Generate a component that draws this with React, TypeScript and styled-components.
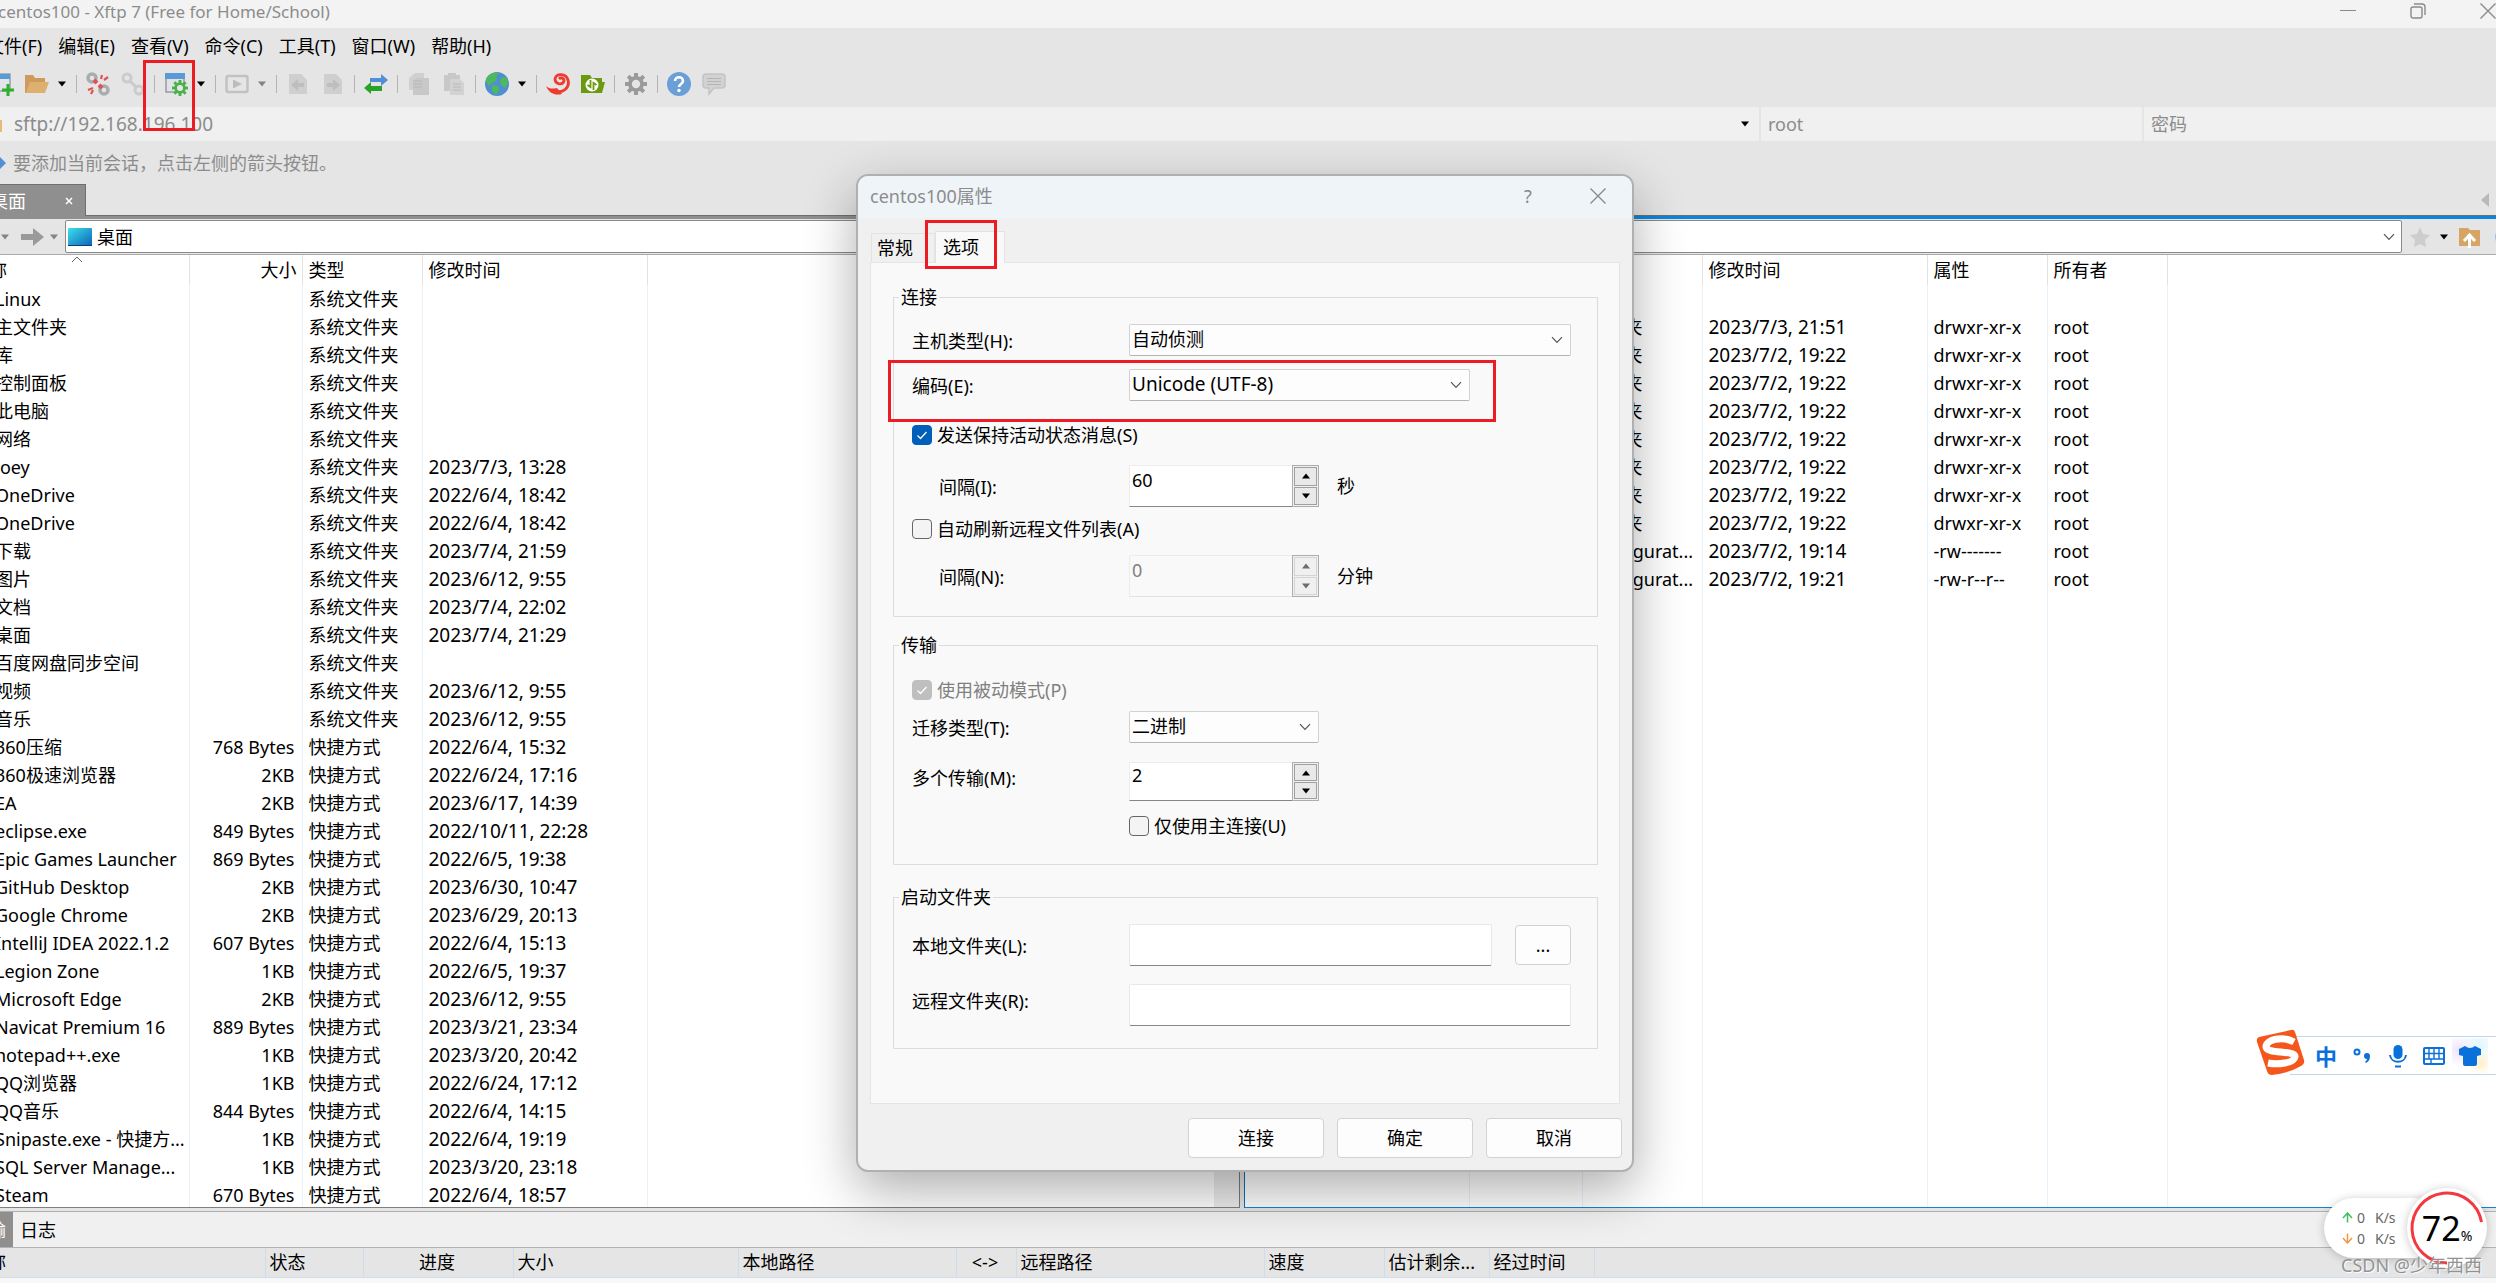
import React from "react";
import styled, { createGlobalStyle, css } from "styled-components";

const GlobalStyle = createGlobalStyle`
  *, *::before, *::after { box-sizing: border-box; }
  body {
    margin: 0;
    overflow: hidden;
    background: #e5e5e5;
    color: #000;
    font-family: "Noto Sans", "Noto Sans CJK SC", sans-serif;
    font-size: 18px;
    line-height: 24px;
  }
  button, input, select { font: inherit; color: inherit; }
  button { padding: 0; border: 0; background: none; }
`;

/* ---------- shell ---------- */

const Shell = styled.div`
  position: relative;
  height: 100vh;
  overflow: hidden;
`;

const Window = styled.main`
  display: flex;
  flex-direction: column;
  height: 100%;
  margin: 0 -20px 0 -32px;
`;

const TitleBar = styled.header`
  display: flex;
  justify-content: space-between;
  height: 28px;
  padding-left: 30px;
  background: #f3f3f3;
  color: #8c8c8c;
`;

const WindowTitle = styled.h1`
  margin: 0;
  font-size: 17px;
  font-weight: 400;
  line-height: 24px;
`;

const WindowControls = styled.div`
  display: flex;
  gap: 14px;
`;

const WindowButton = styled.button`
  display: flex;
  justify-content: center;
  width: 56px;
  height: 28px;
  padding-top: 3px;
  color: #8a8a8a;
`;

const MenuBar = styled.nav`
  display: flex;
  align-items: center;
  gap: 16px;
  height: 37px;
  padding: 0 0 2px 18px;
`;

const MenuItem = styled.button`
  line-height: 24px;
`;

const Toolbar = styled.div`
  display: flex;
  align-items: center;
  gap: 8px;
  height: 42px;
  padding: 0 0 4px 22px;
`;

const ToolButton = styled.button`
  display: flex;
  width: 24px;
  height: 24px;
  & + & { margin-left: 3px; }
  svg { width: 24px; height: 24px; }
`;

const CaretButton = styled.button<{ $muted?: boolean }>`
  display: flex;
  align-items: center;
  justify-content: center;
  width: 10px;
  height: 24px;
  color: ${(p) => (p.$muted ? "#848484" : "#000")};
`;

const Separator = styled.span`
  width: 1px;
  height: 18px;
  margin: 0 1px;
  background: #b4b4b4;
`;

const AddressBar = styled.form`
  display: flex;
  height: 34px;
  gap: 2px;
`;

const AddressCell = styled.div<{ $width?: number }>`
  display: flex;
  align-items: center;
  flex: ${(p) => (p.$width ? `0 0 ${p.$width}px` : "1")};
  padding-left: 7px;
  background: #f0f0f0;
  overflow: hidden;
`;

const AddressInput = styled.input<{ $latin?: boolean }>`
  flex: 1;
  min-width: 0;
  padding: 0;
  border: 0;
  outline: 0;
  background: transparent;
  color: #8c8c8c;
  font-size: ${(p) => (p.$latin ? 19 : 18)}px;
  &::placeholder { color: #8c8c8c; opacity: 1; }
`;

const HintBar = styled.p`
  display: flex;
  align-items: center;
  gap: 7px;
  height: 43px;
  margin: 0;
  padding-left: 24px;
  color: #8c8c8c;
`;

/* ---------- file panes ---------- */

const Panes = styled.div`
  display: grid;
  grid-template-columns: minmax(0, 1fr) minmax(0, 1fr);
  gap: 4px;
  flex: 1;
  min-height: 0;
`;

const PaneBox = styled.section`
  display: flex;
  flex-direction: column;
  min-height: 0;
`;

const TabStrip = styled.div<{ $active?: boolean }>`
  display: flex;
  align-items: flex-end;
  justify-content: space-between;
  height: 35px;
  padding-right: 26px;
  border-bottom: 3px solid ${(p) => (p.$active ? "#0a86e0" : "#8f8f8f")};
  box-shadow: inset 0 -1px 0 #6f6f6f;
`;

const SessionTab = styled.div`
  display: flex;
  align-items: center;
  justify-content: space-between;
  width: 118px;
  height: 32px;
  padding: 0 12px 0 22px;
  border-top: 1px solid #6f6f6f;
  border-right: 1px solid #6f6f6f;
  background: #8f8f8f;
  color: #fff;
`;

const TabClose = styled.button`
  display: flex;
`;

const TabScroll = styled.button`
  display: flex;
  margin-left: auto;
  padding-bottom: 9px;
`;

const PathBar = styled.div`
  display: flex;
  align-items: center;
  height: 36px;
  border-bottom: 1px solid #ababab;
`;

const PathNav = styled.div`
  display: flex;
  align-items: center;
  justify-content: flex-end;
  gap: 5px;
  width: 97px;
  padding-right: 6px;
`;

const ArrowButton = styled.button`
  display: flex;
  margin-left: 6px;
`;

const PathCombo = styled.label`
  display: flex;
  align-items: center;
  flex: 1;
  gap: 5px;
  height: 33px;
  padding: 0 6px 0 2px;
  border: 1px solid #8a8a8a;
  border-radius: 2px;
  background: #fff;
`;

const PathInput = styled.input`
  flex: 1;
  min-width: 0;
  padding: 0;
  border: 0;
  outline: 0;
  background: transparent;
`;

const PathTools = styled.div`
  display: flex;
  align-items: center;
  gap: 7px;
  width: 114px;
  padding-left: 6px;
`;

const ListArea = styled.div<{ $active?: boolean }>`
  display: flex;
  flex: 1;
  min-height: 0;
  overflow: hidden;
  background: #fff;
  border-right: 1px solid #7a7a7a;
  border-bottom: 1px solid ${(p) => (p.$active ? "#0a86e0" : "#808080")};
  border-left: ${(p) => (p.$active ? "1px solid #0a6fb8" : "0")};
`;

const ScrollTrack = styled.div`
  width: 25px;
  background: #ececec;
`;

const FileTable = styled.table`
  flex: 1;
  min-width: 0;
  width: 100%;
  height: 100%;
  table-layout: fixed;
  border-collapse: collapse;
`;

const HeadCell = styled.th<{ $align?: string }>`
  position: relative;
  height: 30px;
  padding: 0 5px 0 6px;
  border-right: 1px solid #e2e2e2;
  font-weight: 400;
  text-align: ${(p) => p.$align ?? "left"};
  white-space: nowrap;
  &:first-child { padding-left: 3px; }
  &:last-child { border-right: 0; }
`;

const SortMark = styled.svg`
  position: absolute;
  top: 1px;
  left: calc(50% - 7px);
`;

const Cell = styled.td<{ $kind?: "name" | "size" | "date" }>`
  height: 28px;
  padding: 0 7px 0 6px;
  border-right: 1px solid #e8f2fb;
  overflow: hidden;
  text-overflow: ellipsis;
  white-space: nowrap;
  &:last-child { border-right: 0; }
  ${(p) => p.$kind === "name" && css`padding: 0 2px 0 27px;`}
  ${(p) => p.$kind === "size" && css`text-align: right;`}
  ${(p) => p.$kind === "date" && css`font-size: 19px;`}
`;

const FillerCell = styled.td`
  padding: 0;
  border-right: 1px solid #e8f2fb;
  &:last-child { border-right: 0; }
`;

/* ---------- transfer panel ---------- */

const TransferPanel = styled.section`
  display: flex;
  flex-direction: column;
  height: 72px;
  margin-top: 3px;
  flex: none;
  background: #f8f8f8;
  border-top: 1px solid #b0b0b0;
`;

const PanelTabs = styled.div`
  display: flex;
  height: 36px;
  background: #f0f0f0;
  border-bottom: 1px solid #b4b4b4;
`;

const PanelTab = styled.button<{ $selected?: boolean }>`
  padding: 0 7px 0 ${(p) => (p.$selected ? 2 : 7)}px;
  background: ${(p) => (p.$selected ? "#8f8f8f" : "transparent")};
  color: ${(p) => (p.$selected ? "#fff" : "#000")};
`;

const TransferTable = styled.table`
  width: 100%;
  table-layout: fixed;
  border-collapse: collapse;
  background: #e5e5e5;
  border-bottom: 1px solid #d0dcea;
`;

const TransferHead = styled.th<{ $align?: string }>`
  height: 29px;
  padding: 0 6px 0 4px;
  border-right: 1px solid #cfdcea;
  font-weight: 400;
  text-align: ${(p) => p.$align ?? "left"};
  white-space: nowrap;
  &:first-child { padding-left: 2px; }
  &:last-child { border-right: 0; }
`;

/* ---------- dialog ---------- */

const Dialog = styled.section`
  position: absolute;
  top: 174px;
  left: 856px;
  width: 778px;
  padding: 0 12px 12px;
  border: 2px solid #b0b0b0;
  border-radius: 12px;
  background: #f0f0f0;
  background-clip: padding-box;
  box-shadow: 0 18px 52px rgba(0, 0, 0, 0.32);
`;

const DialogBar = styled.header`
  display: flex;
  align-items: center;
  height: 42px;
  margin: 0 -12px;
  padding: 0 14px 2px 12px;
  border-radius: 10px 10px 0 0;
  background: #eff4f9;
  color: #8c8c8c;
`;

const DialogTitle = styled.h2`
  flex: 1;
  margin: 0;
  font-size: 18px;
  font-weight: 400;
`;

const DialogIcon = styled.button`
  display: flex;
  justify-content: center;
  width: 40px;
  margin-left: 30px;
  color: #8a8a8a;
`;

const TabList = styled.div`
  display: flex;
  align-items: flex-end;
  height: 44px;
  padding-left: 1px;
`;

const Tab = styled.button<{ $selected?: boolean }>`
  border: 1px solid #e3e3e3;
  border-bottom: 0;
  height: 29px;
  width: 64px;
  padding-right: 16px;
  text-align: center;
  ${(p) =>
    p.$selected &&
    css`
      height: 32px;
      width: 70px;
      padding: 0 18px 2px 0;
      margin-bottom: -1px;
      background: #f9f9f9;
    `}
`;

const TabPanel = styled.div`
  padding: 22px 21px 54px 22px;
  border: 1px solid #e5e5e5;
  background: #f9f9f9;
`;

const Group = styled.fieldset<{ $gap: number; $bottom: number }>`
  min-width: 0;
  margin: 0 0 ${(p) => p.$gap}px;
  padding: 0 26px ${(p) => p.$bottom}px 18px;
  border: 1px solid #dcdcdc;
`;

const Legend = styled.legend`
  margin-left: -13px;
  padding: 0 2px;
`;

const Row = styled.div<{ $top: number; $height: number }>`
  display: flex;
  align-items: center;
  height: ${(p) => p.$height}px;
  margin-top: ${(p) => p.$top}px;
`;

const RowLabel = styled.label<{ $indent?: boolean; $raised?: boolean }>`
  width: 217px;
  padding: 2px 0 ${(p) => (p.$raised ? 10 : 0)}px ${(p) => (p.$indent ? 27 : 0)}px;
`;

const SelectBox = styled.div<{ $width?: number }>`
  position: relative;
  flex: ${(p) => (p.$width ? `0 0 ${p.$width}px` : "1")};
  height: 32px;
  svg {
    position: absolute;
    top: 12px;
    right: 8px;
    pointer-events: none;
  }
`;

const Select = styled.select<{ $latin?: boolean }>`
  width: 100%;
  height: 100%;
  padding: 0 30px 2px 2px;
  border: 1px solid #d2d2d2;
  border-bottom-color: #b4b4b4;
  border-radius: 2px;
  background: #fdfdfd;
  appearance: none;
  font-size: ${(p) => (p.$latin ? 19 : 18)}px;
`;

const CheckLabel = styled.label<{ $disabled?: boolean; $inset?: boolean }>`
  display: flex;
  align-items: center;
  gap: 5px;
  margin-left: ${(p) => (p.$inset ? 217 : 0)}px;
  color: ${(p) => (p.$disabled ? "#808080" : "inherit")};
`;

const CheckWrap = styled.span`
  position: relative;
  display: flex;
  svg {
    position: absolute;
    inset: 0;
    pointer-events: none;
  }
`;

const CheckInput = styled.input`
  width: 20px;
  height: 20px;
  margin: 0;
  border: 1px solid #666;
  border-radius: 4px;
  background: #f4f4f4;
  appearance: none;
  &:checked { border-color: #005fb8; background: #005fb8; }
  &:disabled { border-color: #bfbfbf; background: #bfbfbf; }
`;

const SpinBox = styled.div<{ $disabled?: boolean }>`
  display: flex;
  width: 190px;
  height: 100%;
  color: ${(p) => (p.$disabled ? "#808080" : "#000")};
`;

const SpinInput = styled.input`
  flex: 1;
  min-width: 0;
  padding: 0 2px 13px;
  border: 1px solid #ececec;
  border-right: 0;
  border-bottom: 1px solid #868686;
  background: #fff;
  &:disabled { background: #f9f9f9; border-bottom-color: #e2e2e2; }
`;

const SpinButtons = styled.div`
  display: grid;
  grid-template-rows: 1fr 1fr;
  gap: 1px;
  width: 27px;
  padding: 1px;
  border: 1px solid #adadad;
  background: #f0f0f0;
`;

const SpinButton = styled.button<{ $disabled?: boolean }>`
  display: flex;
  align-items: center;
  justify-content: center;
  border: 1px solid ${(p) => (p.$disabled ? "#d4d4d4" : "#a0a0a0")};
  background: ${(p) => (p.$disabled ? "#f0f0f0" : "#e9e9e9")};
  color: ${(p) => (p.$disabled ? "#6d6d6d" : "#000")};
`;

const Unit = styled.span`
  margin-left: 18px;
`;

const TextInput = styled.input`
  flex: 1;
  min-width: 0;
  height: 42px;
  padding: 0 4px;
  border: 1px solid #e8e8e8;
  border-bottom-color: #868686;
  border-radius: 2px;
  background: #fff;
`;

const PushButton = styled.button<{ $width: number }>`
  width: ${(p) => p.$width}px;
  height: 40px;
  border: 1px solid #d2d2d2;
  border-radius: 4px;
  background: #fdfdfd;
`;

const BrowseSlot = styled.span`
  display: flex;
  margin-left: 23px;
`;

const Footer = styled.footer`
  display: flex;
  justify-content: flex-end;
  gap: 13px;
  margin: 14px -2px 0 0;
`;

/* ---------- overlays ---------- */

const Mark = styled.div<{ $x: number; $y: number; $w: number; $h: number }>`
  position: absolute;
  left: ${(p) => p.$x}px;
  top: ${(p) => p.$y}px;
  width: ${(p) => p.$w}px;
  height: ${(p) => p.$h}px;
  border: 3px solid #ed1c24;
  pointer-events: none;
`;

const ImeBar = styled.div`
  position: absolute;
  right: 0;
  top: 1036px;
  display: flex;
  align-items: center;
  height: 39px;
  width: 206px;
  padding-left: 18px;
  border: solid #c3d5ea;
  border-width: 1px 0;
  background: #fff;
`;

const ImeLogo = styled.svg`
  position: absolute;
  left: -35px;
  top: -9px;
`;

const ImeButton = styled.button`
  display: flex;
  align-items: center;
  justify-content: center;
  width: 36px;
  height: 36px;
  color: #0a70da;
  font-size: 22px;
  font-weight: 700;
`;

const SkinButton = styled(ImeButton)`
  background:
    radial-gradient(circle at 80% 70%, #fff0c4 0, transparent 32%),
    radial-gradient(circle at 20% 35%, #efe2fb 0, transparent 45%),
    radial-gradient(circle at 75% 20%, #e0f6fb 0, transparent 50%);
`;

const SpeedWidget = styled.aside`
  position: absolute;
  right: 9px;
  bottom: 15px;
  display: flex;
  align-items: center;
`;

const SpeedPill = styled.div`
  display: grid;
  grid-template-columns: 15px 18px auto;
  align-content: center;
  align-items: center;
  row-gap: 1px;
  width: 120px;
  height: 60px;
  margin-right: -37px;
  padding-left: 18px;
  border-radius: 30px;
  background: #fff;
  box-shadow: 0 1px 10px rgba(0, 0, 0, 0.22);
  color: #666;
  font-size: 14px;
  line-height: 20px;
`;

const Gauge = styled.div`
  position: relative;
  display: flex;
  align-items: baseline;
  justify-content: center;
  width: 80px;
  height: 80px;
  border-radius: 50%;
  background: #fff;
  box-shadow: 0 1px 10px rgba(0, 0, 0, 0.22);
  line-height: 80px;
  svg { position: absolute; inset: 0; }
`;

const GaugeValue = styled.strong`
  font-size: 34px;
  font-weight: 400;
`;

const GaugeUnit = styled.span`
  font-size: 14px;
`;

const Watermark = styled.div`
  position: absolute;
  right: 14px;
  bottom: 6px;
  color: rgba(140, 140, 140, 0.95);
  text-shadow: 1px 1px 1px #fff;
`;

/* ---------- drawings ---------- */

const Caret = ({ up }: { up?: boolean }) => (
  <svg width="10" height="6" viewBox="0 0 10 6">
    <path d={up ? "M1 5.5 5 .5l4 5z" : "M1 .5h8L5 5.5z"} fill="currentColor" />
  </svg>
);

const Chevron = () => (
  <svg width="12" height="8" viewBox="0 0 12 8" fill="none" stroke="#555" strokeWidth="1.2">
    <path d="M1 1.2 6 6.4l5-5.2" />
  </svg>
);

const Cross = () => (
  <svg width="16" height="16" viewBox="0 0 16 16" stroke="currentColor" strokeWidth="1.4">
    <path d="M.5.5l15 15M15.5.5l-15 15" />
  </svg>
);

const CheckGlyph = () => (
  <svg width="20" height="20" viewBox="0 0 20 20" fill="none" stroke="#fff" strokeWidth="1.3">
    <path d="M5.500 10.500 8.500 13.500 14.500 7" />
  </svg>
);

const gearTeeth = [0, 45, 90, 135, 180, 225, 270, 315];

const Gear = ({ x, y, r, color, hole }: { x: number; y: number; r: number; color: string; hole: string }) => (
  <g transform={`translate(${x} ${y})`} fill={color}>
    {gearTeeth.map((a) => (
      <rect key={a} x={-r * 0.18} y={-r} width={r * 0.36} height={r} transform={`rotate(${a})`} />
    ))}
    <circle r={r * 0.72} />
    <circle r={r * 0.38} fill={hole} />
  </g>
);

const icons: Record<string, React.ReactNode> = {
  newSession: (
    <>
      <path d="M1 2h19v17H1z" fill="#e2e6ea" stroke="#9aa0a6" strokeWidth="1.500" />
      <path d="M1 2h19v5H1z" fill="#5a9bd5" />
      <path d="M12 18h12M18 12v12" stroke="#2fae2f" strokeWidth="3" />
    </>
  ),
  folder: (
    <>
      <path d="M0 3h8l2 3h10v4H6L2 21H0z" fill="#cf9a5b" />
      <path d="M5 10h19l-4 11H1z" fill="#deb070" />
    </>
  ),
  unlink: (
    <g fill="none">
      <rect x="2" y="2" width="8" height="8" rx="4" stroke="#a9adb0" strokeWidth="3.500" />
      <rect x="14" y="14" width="8" height="8" rx="4" stroke="#a9adb0" strokeWidth="3.500" />
      <path d="M8 8l3 3M13 13l3 3" stroke="#e05252" strokeWidth="4" />
      <path d="M16 3l-1 4M22 5l-4 3M2 18l5-2M5 22l2-4" stroke="#e05252" strokeWidth="2.200" />
    </g>
  ),
  link: (
    <g fill="none" stroke="#cbcbcb" strokeWidth="3">
      <rect x="2" y="2" width="8" height="8" rx="4" />
      <rect x="14" y="14" width="8" height="8" rx="4" />
      <path d="M9 9l7 7" />
    </g>
  ),
  properties: (
    <>
      <path d="M2 2h18v18H2z" fill="#dfe3e6" stroke="#9b9b9b" strokeWidth="1.500" />
      <path d="M1 1h20v6H1z" fill="#5a9bd5" />
      <Gear x={16} y={16} r={8} color="#4bb04b" hole="#e5e5e5" />
    </>
  ),
  play: (
    <>
      <rect x="1.500" y="4" width="21" height="16" rx="2" fill="none" stroke="#c2c2c2" strokeWidth="2.500" />
      <path d="M8 7.500v9l9-4.500z" fill="#bdbdbd" />
    </>
  ),
  download: (
    <>
      <path d="M3 2h12l6 6v14H3z" fill="#cfcfcf" />
      <path d="M5 13l7-6v4h6v4h-6v4z" fill="#bebebe" />
    </>
  ),
  upload: (
    <>
      <path d="M3 2h12l6 6v14H3z" fill="#cfcfcf" />
      <path d="M19 13l-7-6v4H6v4h6v4z" fill="#bebebe" />
    </>
  ),
  sync: (
    <>
      <path d="M6 6h11V2l7 6-7 6v-4H6z" fill="#4f8fd6" />
      <path d="M18 14H7v-4l-7 6 7 6v-3h11z" fill="#27a327" />
    </>
  ),
  copy: (
    <>
      <path d="M8 1h9v17H2V6z" fill="#d0d0d0" />
      <path d="M10 6h12v17H6V9z" fill="#c8c8c8" />
      <path d="M6 9h9M6 12h9M6 15h9" stroke="#b8b8b8" />
    </>
  ),
  paste: (
    <>
      <path d="M2 3h4V1h8v2h4v16H2z" fill="#c8c8c8" />
      <path d="M8 7h10l4 4v12H8z" fill="#d2d2d2" />
      <path d="M11 12h8M11 15h8M11 18h8" stroke="#b8b8b8" />
    </>
  ),
  globe: (
    <>
      <circle cx="12" cy="12" r="12" fill="#4f8fd0" />
      <path d="M4 3c4-3 8-3 10-2l-3 4 1 3-5 3-3 3-3-4c0-3 1-5 3-7zM7 13l6 1 1 4-3 5-4-4zM17 5l5 1 1 5-3 5-4-3-1-4z" fill="#4cba5c" />
    </>
  ),
  swirl: (
    <>
      <path d="M0 14c3 3 7 3 11 2l5 6c-7 2-13-1-16-8z" fill="#f0392f" />
      <g fill="none" stroke="#f0392f" strokeWidth="2.800">
        <path d="M8 18c9 5 16-3 14-10C20 1 10 1 9 7c0 5 7 7 9 2 0-3-3-4-5-2" />
      </g>
    </>
  ),
  xftp: (
    <>
      <path d="M0 3h9l2 3h10v4h3l-3 11H0z" fill="#6b9a10" />
      <circle cx="11" cy="13" r="6.500" fill="#fff" />
      <path d="M9.500 8v7l-3-2M12.500 18v-7l3 2" fill="none" stroke="#6b9a10" strokeWidth="1.800" />
    </>
  ),
  gear: <Gear x={12} y={12} r={11} color="#9a9a9a" hole="#e5e5e5" />,
  help: (
    <>
      <circle cx="12" cy="12" r="12" fill="#6b9fd8" />
      <path d="M8 9c0-5 8-5 8 0 0 3-4 3-4 6" fill="none" stroke="#fff" strokeWidth="2.600" />
      <circle cx="12" cy="18.500" r="1.700" fill="#fff" />
    </>
  ),
  chat: (
    <>
      <path d="M4 2h16q3 0 3 3v8q0 3-3 3h-8l-5 6v-6H4q-3 0-3-3V5q0-3 3-3z" fill="#d2d2d2" stroke="#c4c4c4" strokeWidth="1.500" />
      <path d="M5 6.500h14M5 9.500h14M5 12.500h14" stroke="#b4b4b4" />
    </>
  ),
};

type Tool = { type: "icon"; id: string; label: string } | { type: "caret"; muted?: boolean; label: string } | { type: "sep" };

const icon = (id: string, label: string): Tool => ({ type: "icon", id, label });
const caret = (label: string, muted = false): Tool => ({ type: "caret", label, muted });
const sep: Tool = { type: "sep" };

const tools: Tool[] = [
  icon("newSession", "新建"), icon("folder", "打开"), caret("打开列表"), sep,
  icon("unlink", "断开"), icon("link", "重新连接"), sep,
  icon("properties", "属性"), caret("属性列表"), sep,
  icon("play", "运行"), caret("运行列表", true), sep,
  icon("download", "下载"), icon("upload", "上传"), sep,
  icon("sync", "同步"), sep,
  icon("copy", "复制"), icon("paste", "粘贴"), sep,
  icon("globe", "编码"), caret("编码列表"), sep,
  icon("swirl", "Xshell"), icon("xftp", "Xftp"), sep,
  icon("gear", "选项"), sep,
  icon("help", "帮助"), icon("chat", "反馈"),
];

/* ---------- data ---------- */

const SYS = "系统文件夹";
const LNK = "快捷方式";

const localFiles: string[][] = [
  ["Linux", "", SYS, ""],
  ["主文件夹", "", SYS, ""],
  ["库", "", SYS, ""],
  ["控制面板", "", SYS, ""],
  ["此电脑", "", SYS, ""],
  ["网络", "", SYS, ""],
  ["Joey", "", SYS, "2023/7/3, 13:28"],
  ["OneDrive", "", SYS, "2022/6/4, 18:42"],
  ["OneDrive", "", SYS, "2022/6/4, 18:42"],
  ["下载", "", SYS, "2023/7/4, 21:59"],
  ["图片", "", SYS, "2023/6/12, 9:55"],
  ["文档", "", SYS, "2023/7/4, 22:02"],
  ["桌面", "", SYS, "2023/7/4, 21:29"],
  ["百度网盘同步空间", "", SYS, ""],
  ["视频", "", SYS, "2023/6/12, 9:55"],
  ["音乐", "", SYS, "2023/6/12, 9:55"],
  ["360压缩", "768 Bytes", LNK, "2022/6/4, 15:32"],
  ["360极速浏览器", "2KB", LNK, "2022/6/24, 17:16"],
  ["EA", "2KB", LNK, "2023/6/17, 14:39"],
  ["eclipse.exe", "849 Bytes", LNK, "2022/10/11, 22:28"],
  ["Epic Games Launcher", "869 Bytes", LNK, "2022/6/5, 19:38"],
  ["GitHub Desktop", "2KB", LNK, "2023/6/30, 10:47"],
  ["Google Chrome", "2KB", LNK, "2023/6/29, 20:13"],
  ["IntelliJ IDEA 2022.1.2", "607 Bytes", LNK, "2022/6/4, 15:13"],
  ["Legion Zone", "1KB", LNK, "2022/6/5, 19:37"],
  ["Microsoft Edge", "2KB", LNK, "2023/6/12, 9:55"],
  ["Navicat Premium 16", "889 Bytes", LNK, "2023/3/21, 23:34"],
  ["notepad++.exe", "1KB", LNK, "2023/3/20, 20:42"],
  ["QQ浏览器", "1KB", LNK, "2022/6/24, 17:12"],
  ["QQ音乐", "844 Bytes", LNK, "2022/6/4, 14:15"],
  ["Snipaste.exe - 快捷方...", "1KB", LNK, "2022/6/4, 19:19"],
  ["SQL Server Manage...", "1KB", LNK, "2023/3/20, 23:18"],
  ["Steam", "670 Bytes", LNK, "2022/6/4, 18:57"],
];

const dir = (date: string) => ["", "", "文件夹", date, "drwxr-xr-x", "root"];

const remoteFiles: string[][] = [
  ["", "", "", "", "", ""],
  dir("2023/7/3, 21:51"),
  ...Array.from({ length: 7 }, () => dir("2023/7/2, 19:22")),
  ["", "", "Configurat...", "2023/7/2, 19:14", "-rw-------", "root"],
  ["", "", "Configurat...", "2023/7/2, 19:21", "-rw-r--r--", "root"],
];

type PaneData = { heads: string[]; widths: number[]; rows: string[][] };

const local: PaneData = { heads: ["名称", "大小", "类型", "修改时间"], widths: [221, 113, 120, 225], rows: localFiles };
const remote: PaneData = {
  heads: ["名称", "大小", "类型", "修改时间", "属性", "所有者"],
  widths: [224, 113, 120, 225, 120, 120],
  rows: remoteFiles,
};

const transferColumns: { title: string; width?: number; align?: string }[] = [
  { title: "名称", width: 297 },
  { title: "状态", width: 98 },
  { title: "进度", width: 150, align: "center" },
  { title: "大小", width: 225 },
  { title: "本地路径", width: 218 },
  { title: "<->", width: 60, align: "center" },
  { title: "远程路径", width: 248 },
  { title: "速度", width: 120 },
  { title: "估计剩余...", width: 105 },
  { title: "经过时间", width: 105 },
  { title: "" },
];

const kinds = ["name", "size", undefined, "date"] as const;

/* ---------- parts ---------- */

function FileList({ heads, widths, rows }: PaneData) {
  return (
    <FileTable>
      <colgroup>
        {widths.map((w, i) => (
          <col key={i} style={{ width: w }} />
        ))}
        <col />
      </colgroup>
      <thead>
        <tr>
          {heads.map((h, i) => (
            <HeadCell key={h} $align={i === 1 ? "right" : "left"}>
              {h}
              {i === 0 && (
                <SortMark width="12" height="7" viewBox="0 0 12 7" fill="none" stroke="#666">
                  <path d="M1 6l5-5 5 5" />
                </SortMark>
              )}
            </HeadCell>
          ))}
          <HeadCell />
        </tr>
      </thead>
      <tbody>
        {rows.map((r, n) => (
          <tr key={n}>
            {r.map((v, i) => (
              <Cell key={i} $kind={kinds[i]}>{v}</Cell>
            ))}
            <Cell />
          </tr>
        ))}
        <tr>
          {[...widths, 0].map((_, i) => (
            <FillerCell key={i} />
          ))}
        </tr>
      </tbody>
    </FileTable>
  );
}

function Pane({ data, active, title }: { data: PaneData; active?: boolean; title: string }) {
  return (
    <PaneBox>
      <TabStrip $active={active}>
        {!active && (
          <SessionTab>
            {title}
            <TabClose aria-label="关闭标签">
              <svg width="8" height="8" viewBox="0 0 8 8" stroke="#fff" strokeWidth="1.500">
                <path d="M1 1l6 6M7 1 1 7" />
              </svg>
            </TabClose>
          </SessionTab>
        )}
        <TabScroll aria-label="向左滚动">
          <svg width="9" height="14" viewBox="0 0 9 14"><path d="M8 0v14L0 7z" fill="#b9b9b9" /></svg>
        </TabScroll>
      </TabStrip>
      <PathBar>
        <PathNav>
          <CaretButton $muted aria-label="后退列表"><Caret /></CaretButton>
          <ArrowButton aria-label="前进">
            <svg width="23" height="18" viewBox="0 0 23 18">
              <path d="M0 6h12V0l11 9-11 9v-6H0z" fill="#9a9a9a" />
            </svg>
          </ArrowButton>
          <CaretButton $muted aria-label="前进列表"><Caret /></CaretButton>
        </PathNav>
        <PathCombo>
          <svg width="24" height="18" viewBox="0 0 24 18">
            <defs>
              <linearGradient id="desk" x1="0" y1="0" x2="1" y2="1">
                <stop offset="0" stopColor="#3ee0ea" />
                <stop offset="1" stopColor="#0b62b8" />
              </linearGradient>
            </defs>
            <rect width="24" height="18" rx="1" fill="url(#desk)" />
            <path d="M0 17.500h24" stroke="#0a3f78" />
          </svg>
          <PathInput aria-label="路径" defaultValue={title} />
          <Chevron />
        </PathCombo>
        <PathTools>
          <ToolButton aria-label="收藏">
            <svg viewBox="0 0 24 24">
              <path d="M12 2l3 7 7 1-5 5 1 7-6-3-6 3 1-7-5-5 7-1z" fill="#cdcdcd" />
            </svg>
          </ToolButton>
          <CaretButton aria-label="收藏列表"><Caret /></CaretButton>
          <ToolButton aria-label="上一级">
            <svg viewBox="0 0 24 24">
              <path d="M3 3h9l2 2h10v16H3z" fill="#d6a566" />
              <path d="M13.500 23V12M8 16l5.500-6 5.500 6" fill="none" stroke="#fff" strokeWidth="3" />
            </svg>
          </ToolButton>
          <ToolButton aria-label="刷新">
            <svg viewBox="0 0 24 24"><circle cx="15" cy="12" r="10" fill="#9cc4e8" /></svg>
          </ToolButton>
        </PathTools>
      </PathBar>
      <ListArea $active={active}>
        <FileList {...data} />
        {!active && <ScrollTrack />}
      </ListArea>
    </PaneBox>
  );
}

function Check(props: { label: string; checked?: boolean; disabled?: boolean; inset?: boolean }) {
  return (
    <CheckLabel $disabled={props.disabled} $inset={props.inset}>
      <CheckWrap>
        <CheckInput type="checkbox" defaultChecked={props.checked} disabled={props.disabled} />
        {props.checked && <CheckGlyph />}
      </CheckWrap>
      {props.label}
    </CheckLabel>
  );
}

function Spin({ id, value, disabled }: { id: string; value: string; disabled?: boolean }) {
  return (
    <SpinBox $disabled={disabled}>
      <SpinInput id={id} defaultValue={value} disabled={disabled} />
      <SpinButtons>
        <SpinButton $disabled={disabled} aria-label="增加"><Caret up /></SpinButton>
        <SpinButton $disabled={disabled} aria-label="减少"><Caret /></SpinButton>
      </SpinButtons>
    </SpinBox>
  );
}

function Dropdown({ id, value, width, latin }: { id: string; value: string; width?: number; latin?: boolean }) {
  return (
    <SelectBox $width={width}>
      <Select id={id} $latin={latin}><option>{value}</option></Select>
      <Chevron />
    </SelectBox>
  );
}

function PropertiesDialog() {
  return (
    <Dialog role="dialog" aria-labelledby="dialog-title">
      <DialogBar>
        <DialogTitle id="dialog-title">centos100属性</DialogTitle>
        <DialogIcon aria-label="帮助">?</DialogIcon>
        <DialogIcon aria-label="关闭"><Cross /></DialogIcon>
      </DialogBar>
      <TabList role="tablist">
        <Tab role="tab">常规</Tab>
        <Tab role="tab" aria-selected $selected>选项</Tab>
      </TabList>
      <TabPanel role="tabpanel">
        <Group $gap={16} $bottom={19}>
          <Legend>连接</Legend>
          <Row $top={15} $height={32}>
            <RowLabel htmlFor="host">主机类型(H):</RowLabel>
            <Dropdown id="host" value="自动侦测" />
          </Row>
          <Row $top={13} $height={32}>
            <RowLabel htmlFor="encoding">编码(E):</RowLabel>
            <Dropdown id="encoding" value="Unicode (UTF-8)" width={341} latin />
          </Row>
          <Row $top={24} $height={20}><Check label="发送保持活动状态消息(S)" checked /></Row>
          <Row $top={20} $height={42}>
            <RowLabel htmlFor="keepalive" $indent>间隔(I):</RowLabel>
            <Spin id="keepalive" value="60" />
            <Unit>秒</Unit>
          </Row>
          <Row $top={12} $height={20}><Check label="自动刷新远程文件列表(A)" /></Row>
          <Row $top={16} $height={42}>
            <RowLabel htmlFor="refresh" $indent>间隔(N):</RowLabel>
            <Spin id="refresh" value="0" disabled />
            <Unit>分钟</Unit>
          </Row>
        </Group>
        <Group $gap={20} $bottom={28}>
          <Legend>传输</Legend>
          <Row $top={23} $height={20}><Check label="使用被动模式(P)" checked disabled /></Row>
          <Row $top={11} $height={32}>
            <RowLabel htmlFor="mode">迁移类型(T):</RowLabel>
            <Dropdown id="mode" value="二进制" width={190} />
          </Row>
          <Row $top={19} $height={39}>
            <RowLabel htmlFor="count" $raised>多个传输(M):</RowLabel>
            <Spin id="count" value="2" />
          </Row>
          <Row $top={15} $height={20}><Check label="仅使用主连接(U)" inset /></Row>
        </Group>
        <Group $gap={0} $bottom={22}>
          <Legend>启动文件夹</Legend>
          <Row $top={15} $height={42}>
            <RowLabel htmlFor="local-dir">本地文件夹(L):</RowLabel>
            <TextInput id="local-dir" />
            <BrowseSlot><PushButton $width={56} type="button">...</PushButton></BrowseSlot>
          </Row>
          <Row $top={18} $height={42}>
            <RowLabel htmlFor="remote-dir" $raised>远程文件夹(R):</RowLabel>
            <TextInput id="remote-dir" />
          </Row>
        </Group>
      </TabPanel>
      <Footer>
        <PushButton $width={136}>连接</PushButton>
        <PushButton $width={136}>确定</PushButton>
        <PushButton $width={136}>取消</PushButton>
      </Footer>
    </Dialog>
  );
}

function Ime() {
  return (
    <ImeBar>
      <ImeLogo width="50" height="50" viewBox="0 0 50 50">
        <path d="M4 9 36 2q3-1 4 2l9 28q1 4-3 6-12 7-29 9-4 0-5-4L2 14q-1-4 2-5z" fill="#f4561c" />
        <path d="M39 14C28 8 11 11 11 19c0 7 30 3 29 10-1 6-17 8-27 6" fill="none" stroke="#fff" strokeWidth="7" />
      </ImeLogo>
      <ImeButton aria-label="中文">中</ImeButton>
      <ImeButton aria-label="标点">
        <svg width="20" height="20" viewBox="0 0 20 20">
          <circle cx="5" cy="6" r="2.500" fill="none" stroke="currentColor" strokeWidth="2" />
          <path d="M12 10a3 3 0 1 1 6 0c0 4-2 6-4 7l-1-1c1-1 2-2 2-3-2 0-3-1-3-3z" fill="currentColor" />
        </svg>
      </ImeButton>
      <ImeButton aria-label="语音">
        <svg width="20" height="24" viewBox="0 0 20 24" fill="none" stroke="currentColor" strokeWidth="2">
          <rect x="5.500" y="1" width="9" height="14" rx="4.500" fill="currentColor" stroke="none" />
          <path d="M2 11c1 9 15 9 16 0M7 22.500h6" />
        </svg>
      </ImeButton>
      <ImeButton aria-label="键盘">
        <svg width="24" height="20" viewBox="0 0 24 20" fill="none" stroke="currentColor" strokeWidth="2">
          <rect x="2" y="2" width="20" height="16" rx="1" />
          <path d="M2 7.500h20M2 13h20M7 2v11M12 2v11M17 2v11M9 13v5" strokeWidth="1.400" />
        </svg>
      </ImeButton>
      <SkinButton aria-label="皮肤">
        <svg width="22" height="22" viewBox="0 0 22 22">
          <path d="M6 1q5 4 10 0l6 3v6l-4 1v8q0 2-2 2H6q-2 0-2-2v-8l-4-1V4z" fill="currentColor" />
        </svg>
      </SkinButton>
    </ImeBar>
  );
}

const SpeedArrow = ({ up }: { up?: boolean }) => (
  <svg width="11" height="11" viewBox="0 0 11 11" fill="none" stroke={up ? "#3fc05a" : "#f59445"} strokeWidth="1.500">
    <path d={up ? "M5.500 10.500V1M1 6l4.500-5L10 6" : "M5.500.5V10M1 5l4.500 5L10 5"} />
  </svg>
);

function Speed() {
  return (
    <SpeedWidget>
      <SpeedPill>
        <SpeedArrow up /><span>0</span><span>K/s</span>
        <SpeedArrow /><span>0</span><span>K/s</span>
      </SpeedPill>
      <Gauge>
        <svg viewBox="0 0 80 80" fill="none" stroke="#f4383f" strokeWidth="3">
          <path d="M74.500 34A35 35 0 1 0 40 75" />
        </svg>
        <GaugeValue>72</GaugeValue>
        <GaugeUnit>%</GaugeUnit>
      </Gauge>
    </SpeedWidget>
  );
}

export default function App() {
  return (
    <Shell>
      <GlobalStyle />
      <Window>
        <TitleBar>
          <WindowTitle>centos100 - Xftp 7 (Free for Home/School)</WindowTitle>
          <WindowControls>
            <WindowButton aria-label="最小化">
              <svg width="16" height="16" viewBox="0 0 16 16" stroke="currentColor"><path d="M0 7.500h16" /></svg>
            </WindowButton>
            <WindowButton aria-label="还原">
              <svg width="16" height="16" viewBox="0 0 16 16" fill="none" stroke="currentColor" strokeWidth="1.400">
                <rect x="1" y="4" width="11" height="11" rx="2" />
                <path d="M4 1h8q3 0 3 3v8" />
              </svg>
            </WindowButton>
            <WindowButton aria-label="关闭"><Cross /></WindowButton>
          </WindowControls>
        </TitleBar>
        <MenuBar>
          {["文件(F)", "编辑(E)", "查看(V)", "命令(C)", "工具(T)", "窗口(W)", "帮助(H)"].map((m) => (
            <MenuItem key={m}>{m}</MenuItem>
          ))}
        </MenuBar>
        <Toolbar>
          {tools.map((t, i) =>
            t.type === "sep" ? (
              <Separator key={i} />
            ) : t.type === "caret" ? (
              <CaretButton key={i} $muted={t.muted} aria-label={t.label}><Caret /></CaretButton>
            ) : (
              <ToolButton key={i} aria-label={t.label}><svg viewBox="0 0 24 24">{icons[t.id]}</svg></ToolButton>
            )
          )}
        </Toolbar>
        <AddressBar>
          <AddressCell>
            <svg width="39" height="20" viewBox="0 0 39 20">
              <rect x="12" y="6" width="15" height="12" rx="1" fill="#e8b878" />
              <path d="M15 7V4q4-5 8 0v3" fill="none" stroke="#d8a868" strokeWidth="2" />
            </svg>
            <AddressInput $latin aria-label="地址" defaultValue="sftp://192.168.196.100" />
            <CaretButton type="button" aria-label="地址列表"><Caret /></CaretButton>
            <svg width="9" height="1" />
          </AddressCell>
          <AddressCell $width={381}><AddressInput aria-label="用户名" defaultValue="root" /></AddressCell>
          <AddressCell $width={372}><AddressInput aria-label="密码" placeholder="密码" /></AddressCell>
        </AddressBar>
        <HintBar>
          <svg width="14" height="14" viewBox="0 0 14 14"><path d="M0 4h7V0l7 7-7 7v-4H0z" fill="#4f8fd6" /></svg>
          要添加当前会话，点击左侧的箭头按钮。
        </HintBar>
        <Panes>
          <Pane data={local} title="桌面" />
          <Pane data={remote} title="/root" active />
        </Panes>
        <TransferPanel>
          <PanelTabs>
            <PanelTab $selected>传输</PanelTab>
            <PanelTab>日志</PanelTab>
          </PanelTabs>
          <TransferTable>
            <colgroup>
              {transferColumns.map((c, i) => (
                <col key={i} style={{ width: c.width }} />
              ))}
            </colgroup>
            <thead>
              <tr>
                {transferColumns.map((c, i) => (
                  <TransferHead key={i} $align={c.align}>{c.title}</TransferHead>
                ))}
              </tr>
            </thead>
          </TransferTable>
        </TransferPanel>
      </Window>
      <PropertiesDialog />
      <Mark $x={143} $y={60} $w={52} $h={71} />
      <Mark $x={925} $y={220} $w={72} $h={49} />
      <Mark $x={888} $y={360} $w={608} $h={62} />
      <Ime />
      <Speed />
      <Watermark>CSDN @少年西西</Watermark>
    </Shell>
  );
}
